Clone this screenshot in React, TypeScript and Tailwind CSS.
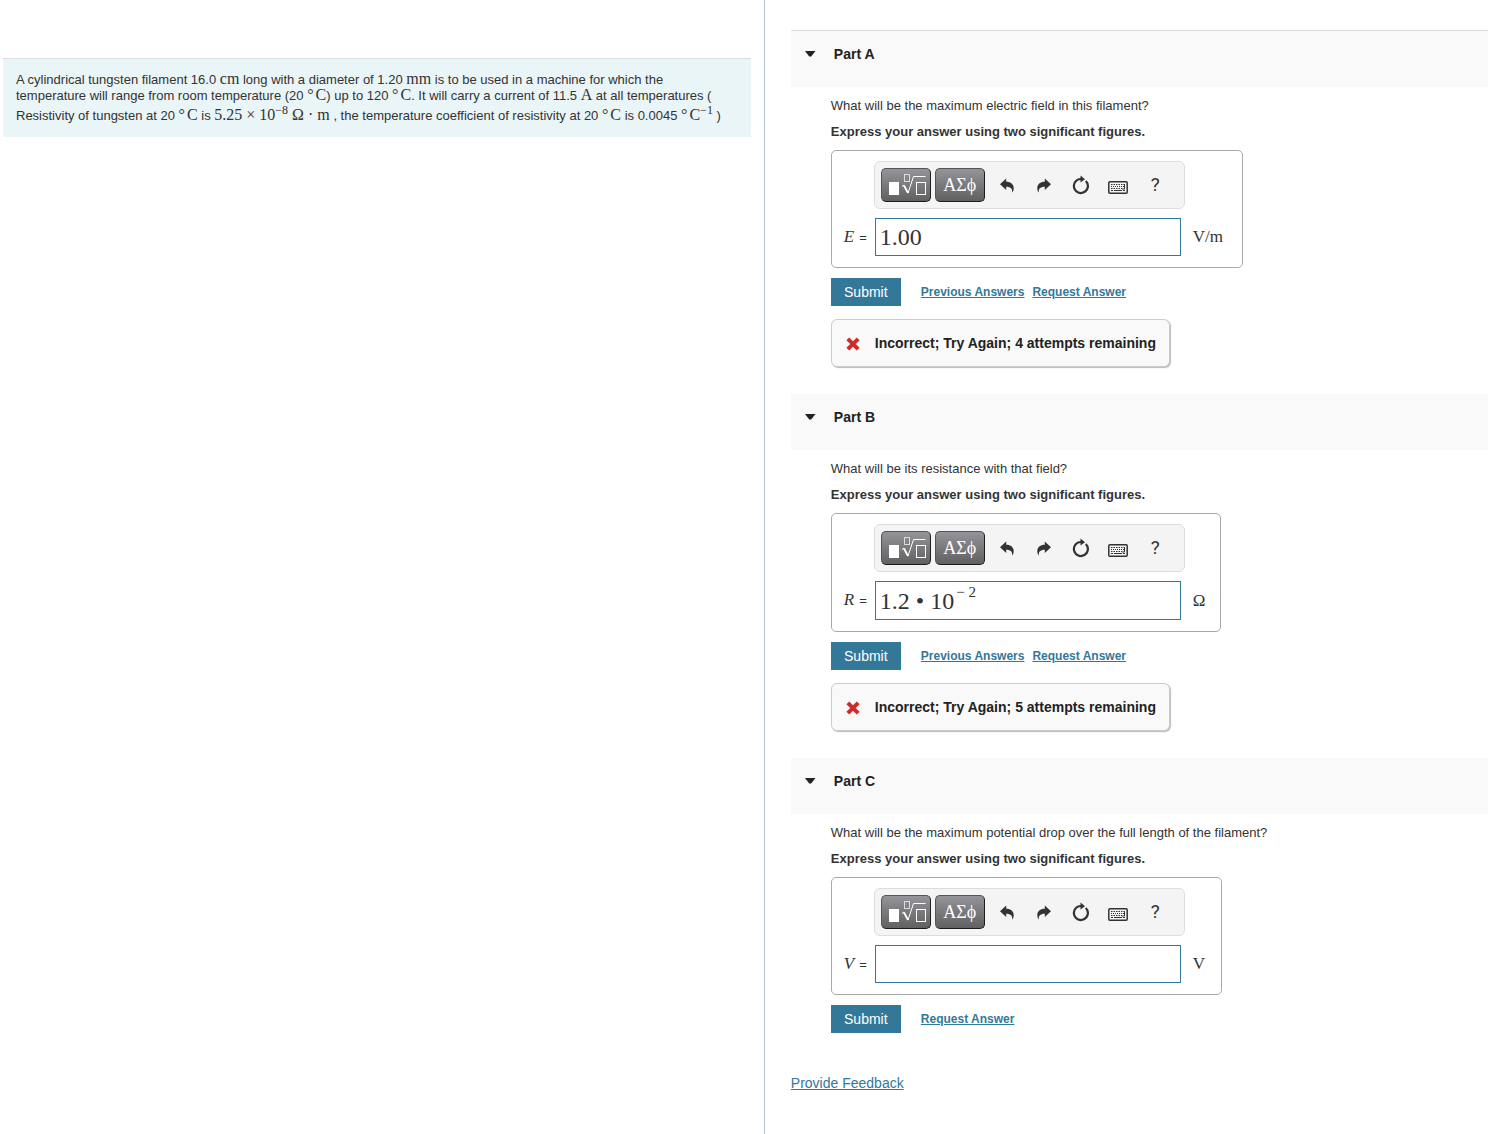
import type { ReactNode } from "react";

const serif = "font-['Liberation_Serif',serif]";

function M({ children }: { children: ReactNode }) {
  return <span className="font-['Liberation_Serif',serif] text-base leading-3">{children}</span>;
}

function Sup({ children }: { children: ReactNode }) {
  return <sup className="-top-1.5 text-[12px]">{children}</sup>;
}

function DegC() {
  return (
    <M>
      ° <span className="-ml-0.5">C</span>
    </M>
  );
}

function TemplateIcon() {
  return (
    <svg width="40" height="22" viewBox="-1 0 40 22" fill="none" stroke="#fff" aria-hidden="true">
      <rect x="2" y="8" width="10" height="13" fill="#fff" stroke="none" />
      <rect x="17.500" y="0.500" width="5" height="7" stroke="#ddd" />
      <path d="M15 12.500l2-1.500 4 8 5.500-16.500h12" />
      <path d="M17 11.500l4 7.500" strokeWidth="1.800" />
      <rect x="29.500" y="8.500" width="9" height="12" />
    </svg>
  );
}

function UndoIcon() {
  return (
    <svg width="14" height="15" viewBox="0 0 14 15" fill="#333" aria-hidden="true">
      <path d="M6.200 0.500v3.200c4.600 0 7.500 2.600 7.500 6.500 0 1.800-.5 3.200-1.500 4.300.3-3.500-1.300-5.700-6-5.700V12L0 6.200z" />
    </svg>
  );
}

function RedoIcon() {
  return (
    <svg width="14" height="15" viewBox="0 0 14 15" fill="#333" aria-hidden="true">
      <path d="M7.800 0.500v3.200C3.200 3.700.3 6.300.3 10.200c0 1.800.5 3.200 1.500 4.300C1.500 11 3.100 8.800 7.800 8.800V12L14 6.200z" />
    </svg>
  );
}

function ResetIcon() {
  return (
    <svg width="18" height="20" viewBox="0 0 18 20" fill="none" aria-hidden="true">
      <path d="M13.800 6A7 7 0 1 1 9 4" stroke="#333" strokeWidth="2.200" />
      <path d="M8.500 0.500l4.500 3.800-4.500 3.300z" fill="#333" />
    </svg>
  );
}

function KeyboardIcon() {
  return (
    <svg width="20" height="13" viewBox="0 0 20 13" fill="none" stroke="#333" aria-hidden="true">
      <rect x="0.800" y="0.800" width="18.400" height="11.400" rx="1" strokeWidth="1.500" />
      <path d="M3 3.500h14" strokeDasharray="1.500 1" />
      <path d="M3 5.500h11M15 5.500h2" strokeDasharray="1 1" />
      <path d="M3 7.500h11" strokeDasharray="1.500 1" />
      <path d="M16.500 3v5H14" />
      <path d="M3 9.500h2M6 9.500h8M15 9.500h2" />
    </svg>
  );
}

const darkBtn =
  "flex h-[34px] w-[50px] items-center justify-center rounded-[5px] border border-[#555] border-r-[#1c1c1c] border-b-[#1c1c1c] bg-linear-to-b from-[#94949a] to-[#616161] text-white";
const toolBtn = "flex h-8 w-[37px] items-center justify-center text-[#333]";

function Toolbar() {
  return (
    <div className="-ml-px flex h-12 w-[311px] items-center rounded-md border border-[#dddddd] bg-[#f4f4f4] pl-1.5">
      <button className={darkBtn} aria-label="Templates">
        <TemplateIcon />
      </button>
      <button className={`${darkBtn} ${serif} ml-1 text-[18px] leading-none`} aria-label="Symbols">
        ΑΣϕ
      </button>
      <div className="ml-1 flex">
        <button className={toolBtn} aria-label="Undo"><UndoIcon /></button>
        <button className={toolBtn} aria-label="Redo"><RedoIcon /></button>
        <button className={toolBtn} aria-label="Reset"><ResetIcon /></button>
        <button className={`${toolBtn} pt-1`} aria-label="Keyboard shortcuts"><KeyboardIcon /></button>
        <button className={`${toolBtn} font-['Roboto',sans-serif] text-[19px]`} aria-label="Help">?</button>
      </div>
    </div>
  );
}

type PartProps = {
  id: string;
  question: string;
  symbol: string;
  unit: string;
  unitWidth: string;
  value?: string;
  formula?: ReactNode;
  attempts?: number;
  first?: boolean;
};

const link = "text-[12px] font-bold text-[#347899] underline";

function Part({ id, question, symbol, unit, unitWidth, value, formula, attempts, first }: PartProps) {
  const fieldId = `answer-${id}`;
  return (
    <section>
      <header
        className={`flex items-start gap-[18px] bg-[#f9f9f9] pt-3.5 pl-3.5 ${first ? "h-[57px] border-t border-[#dddddd]" : "h-14"}`}
      >
        <svg className="mt-1.5" width="11" height="6" viewBox="0 0 11 6" fill="#222" aria-hidden="true">
          <path d="M0 0h10.500L6.200 5.500h-2z" />
        </svg>
        <h2 className="text-[14px] leading-[18px] font-bold text-[#222]">Part {id}</h2>
      </header>
      <div className="pl-10">
        <p className="mt-[11px] text-[13px] leading-4">{question}</p>
        <p className="mt-2.5 text-[13px] leading-4 font-bold">Express your answer using two significant figures.</p>
        <div className="mt-2.5 grid w-fit grid-cols-[31px_306px_auto] items-center gap-y-[9px] rounded-[5px] border border-[#aaaaaa] pt-2.5 pb-[11px] pl-3">
          <div className="col-span-2 col-start-2">
            <Toolbar />
          </div>
          <label htmlFor={fieldId} className="flex items-baseline justify-between pr-2 text-[13px] leading-5">
            <i className={`${serif} text-[17px]`}>{symbol}</i>
            <span>=</span>
          </label>
          {formula ? (
            <div
              id={fieldId}
              role="textbox"
              aria-label={`${symbol} =`}
              contentEditable
              suppressContentEditableWarning
              className={`${serif} h-[39px] border border-[#347899] bg-white px-1 text-[24px] leading-[38px]`}
            >
              {formula}
            </div>
          ) : (
            <input
              id={fieldId}
              defaultValue={value}
              className={`${serif} h-[38px] w-full border border-[#347899] bg-white px-1 text-[24px]`}
            />
          )}
          <span className={`${serif} ${unitWidth} pl-3 text-[17px]`}>{unit}</span>
        </div>
        <div className="mt-2.5 flex h-7 items-center">
          <button className="h-7 w-[70px] bg-[#347899] text-[14px] text-white">Submit</button>
          <div className="ml-5 flex gap-2 leading-4">
            {attempts && <a href="#previous" className={link}>Previous Answers</a>}
            <a href="#request" className={link}>Request Answer</a>
          </div>
        </div>
        {attempts && (
          <div className="mt-[13px] flex h-12 w-fit items-center rounded-md border border-[#cccccc] bg-[#f9f9f9] pt-px pr-[13px] pl-3.5 text-[14px] font-bold text-[#222] shadow-[1px_1px_1px_#bbb]">
            <svg width="14" height="14" viewBox="0 0 14 14" stroke="#d02b2b" strokeWidth="4" aria-hidden="true">
              <path d="M1.800 1.800l10.400 10.400M12.200 1.800L1.800 12.200" />
            </svg>
            <span className="ml-[15px]">Incorrect; Try Again; {attempts} attempts remaining</span>
          </div>
        )}
      </div>
    </section>
  );
}

export default function App() {
  return (
    <div className="flex min-h-screen bg-white font-['Liberation_Sans',Arial,sans-serif] text-[#333]">
      <aside className="w-[51.4%] shrink-0 border-r border-[#b4c8d3] pt-[58px] pr-[13px] pl-[3px]">
        <div className="border-t border-[#d9dddd] bg-[#eaf5f7] px-[13px] pt-[13px] pb-[9px] text-[13px]">
          <p className="leading-4">
            A cylindrical tungsten filament 16.0 <M>cm</M> long with a diameter of 1.20 <M>mm</M> is to be used in a
            machine for which the
          </p>
          <p className="leading-4">
            temperature will range from room temperature (20 <DegC />) up to 120 <DegC />. It will carry a current of
            11.5 <M>A</M> at all temperatures (
          </p>
          <p className="leading-6">
            Resistivity of tungsten at 20 <DegC /> is <M>5.25 × 10<Sup>−8</Sup> Ω · m</M> , the temperature coefficient
            of resistivity at 20 <DegC /> is 0.0045 <DegC /><M><Sup>−1</Sup></M> )
          </p>
        </div>
      </aside>
      <main className="min-w-0 flex-1 pt-[30px] pl-[26px]">
        <div className="flex flex-col gap-[27px]">
          <Part
            id="A"
            first
            question="What will be the maximum electric field in this filament?"
            symbol="E"
            unit="V/m"
            unitWidth="w-[61px]"
            value="1.00"
            attempts={4}
          />
          <Part
            id="B"
            question="What will be its resistance with that field?"
            symbol="R"
            unit="Ω"
            unitWidth="w-[39px]"
            formula={<>1.2 • 10<sup className="ml-0.5 -top-3 text-[15px]">− 2</sup></>}
            attempts={5}
          />
          <Part
            id="C"
            question="What will be the maximum potential drop over the full length of the filament?"
            symbol="V"
            unit="V"
            unitWidth="w-10"
          />
        </div>
        <a href="#feedback" className="mt-[41px] inline-block text-[14px] leading-[18px] text-[#347899] underline">
          Provide Feedback
        </a>
      </main>
    </div>
  );
}
